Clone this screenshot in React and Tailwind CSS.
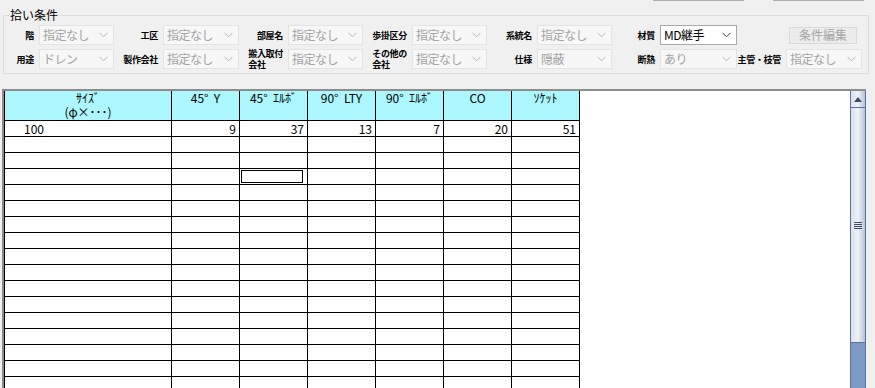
import React from 'react';

const jp = "font-['Noto_Sans_CJK_JP','Noto_Sans',sans-serif]";

function Chevron({ enabled }) {
  return (
    <svg width="9" height="6" viewBox="0 0 9 6" className="shrink-0">
      <path d="M0.5 0.8 L4.5 4.8 L8.5 0.8" fill="none" stroke={enabled ? '#3c3c3c' : '#b4b4b4'} strokeWidth="1" />
    </svg>
  );
}

function Combo({ value, enabled }) {
  return (
    <div
      className={
        'h-[20px] flex items-center justify-between pl-[3px] pr-[5px] border text-[12px] tracking-[-0.5px] leading-none ' +
        (enabled ? 'bg-white border-[#a9a9a9] text-black' : 'bg-[#f7f7f7] border-[#e4e4e4] text-[#a3a3a3]')
      }
    >
      <span>{value}</span>
      <Chevron enabled={enabled} />
    </div>
  );
}

function Label({ lines }) {
  return (
    <div className="flex items-center justify-end pr-[5px] whitespace-nowrap">
      <div className="text-[9px] font-bold leading-[11px] tracking-[-0.3px] text-black text-left">
        {lines.map((l, i) => (
          <div key={i}>{l}</div>
        ))}
      </div>
    </div>
  );
}

// 拾い条件の行
const row1 = [
  { label: ['階'], value: '指定なし' },
  { label: ['工区'], value: '指定なし' },
  { label: ['部屋名'], value: '指定なし' },
  { label: ['歩掛区分'], value: '指定なし' },
  { label: ['系統名'], value: '指定なし' },
  { label: ['材質'], value: 'MD継手', enabled: true },
];

const row2 = [
  { label: ['用途'], value: 'ドレン' },
  { label: ['製作会社'], value: '指定なし' },
  { label: ['搬入取付', '会社'], value: '指定なし' },
  { label: ['その他の', '会社'], value: '指定なし' },
  { label: ['仕様'], value: '隠蔽' },
  { label: ['断熱'], value: 'あり' },
  { label: ['主管・枝管'], value: '指定なし' },
];

const headers = [
  ['ｻｲｽﾞ', '(φ×･･･)'],
  ['45°  Y'],
  ['45°  ｴﾙﾎﾞ'],
  ['90°  LTY'],
  ['90°  ｴﾙﾎﾞ'],
  ['CO'],
  ['ｿｹｯﾄ'],
];

const rows = [['100', '9', '37', '13', '7', '20', '51']];
for (let i = 0; i < 17; i++) rows.push(['', '', '', '', '', '', '']);

function cellClass(ci) {
  return ci === 0 ? 'w-[168px] border-l border-r border-black' : 'w-[68px] border-r border-black';
}

export default function App() {
  return (
    <div className={'w-[875px] h-[388px] overflow-hidden bg-[#f0f0f0] ' + jp}>
      {/* 上部ボタンの下端 */}
      <div className="flex h-[1px]">
        <div className="ml-[653px] w-[91px] bg-[#adadad]" />
        <div className="ml-[29px] w-[91px] bg-[#adadad]" />
      </div>

      <div className="pt-[6px] pl-[3px]">
        <fieldset className="w-[866px] border border-[#dcdcdc] pt-[2px] pb-[4px]">
          <legend className="ml-[5px] px-[1px] text-[12px] leading-[16px] text-black">拾い条件</legend>
          <div className="grid grid-cols-[35px_75px_49px_76px_49px_75px_49px_75px_50px_75px_48px_77px_49px_76px] grid-rows-[20px_20px] gap-y-[4px]">
            {row1.map((f, i) => (
              <React.Fragment key={i}>
                <Label lines={f.label} />
                <Combo value={f.value} enabled={f.enabled} />
              </React.Fragment>
            ))}
            <div className="col-span-2 flex items-center pl-[52px]">
              <div className="w-[68px] h-[17px] flex items-center justify-center bg-[#ececec] border border-[#d9d9d9] text-[12px] leading-none text-[#a6a6a6]">
                条件編集
              </div>
            </div>
            {row2.map((f, i) => (
              <React.Fragment key={i}>
                <Label lines={f.label} />
                <Combo value={f.value} enabled={f.enabled} />
              </React.Fragment>
            ))}
          </div>
        </fieldset>
      </div>

      {/* 集計グリッド */}
      <div className="mt-[15px] ml-[2px] w-[864px] h-[320px] border-t-2 border-l-2 border-[#8c8c8c] flex bg-white">
        <div className="w-[576px] flex flex-col">
          <div className="flex bg-[#abf7fd]">
            {headers.map((h, ci) => (
              <div key={ci} className={cellClass(ci) + ' h-[30px] border-b text-center text-[12px] leading-[14px] whitespace-pre'}>
                {h.map((l, i) => (
                  <div key={i}>{l}</div>
                ))}
              </div>
            ))}
          </div>
          {rows.map((r, ri) => (
            <div key={ri} className="flex">
              {r.map((v, ci) => (
                <div
                  key={ci}
                  className={
                    cellClass(ci) +
                    ' h-[16px] border-b text-[12px] leading-[15px] ' +
                    (ci === 0 ? 'pl-[19px] text-left' : 'pr-[3px] text-right')
                  }
                >
                  {ri === 3 && ci === 2 ? <div className="m-[1px] h-[13px] border border-black" /> : v}
                </div>
              ))}
            </div>
          ))}
        </div>
        <div className="flex-1" />

        {/* スクロールバー */}
        <div className="w-[16px] flex flex-col border-x border-[#5f729c]">
          <div className="h-[17px] shrink-0 flex items-center justify-center border-b border-[#5f729c] bg-gradient-to-r from-[#dae1ed] via-[#eef2f8] to-[#b7c4d9]">
            <svg width="8" height="5" viewBox="0 0 8 5">
              <path d="M4 0 L8 5 L0 5 Z" fill="#3f4a66" />
            </svg>
          </div>
          <div className="h-[235px] shrink-0 flex items-center justify-center border-b border-[#5f729c] bg-gradient-to-r from-[#dae1ed] via-[#eef2f8] to-[#b7c4d9]">
            <div className="flex flex-col gap-[1px]">
              <div className="w-[8px] h-[1px] bg-[#3f4a66]" />
              <div className="w-[8px] h-[1px] bg-[#3f4a66]" />
              <div className="w-[8px] h-[1px] bg-[#3f4a66]" />
              <div className="w-[8px] h-[1px] bg-[#3f4a66]" />
            </div>
          </div>
          <div className="flex-1 bg-[#7b9ac6]" />
        </div>
      </div>
    </div>
  );
}
